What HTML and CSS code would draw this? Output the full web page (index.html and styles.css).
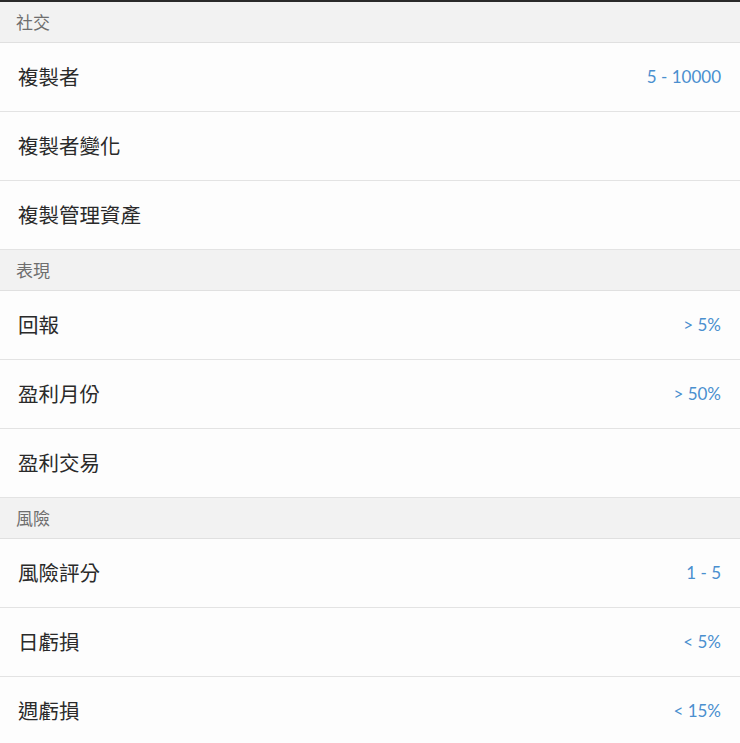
FILE: index.html
```html
<!DOCTYPE html>
<html lang="zh-Hant">
<head>
<meta charset="utf-8">
<title>篩選</title>
<link rel="stylesheet" href="styles.css">
</head>
<body>
<div class="list">
  <div class="section">社交</div>
  <div class="row"><span class="label">複製者</span><span class="value">5 - 10000</span></div>
  <div class="row"><span class="label">複製者變化</span></div>
  <div class="row"><span class="label">複製管理資產</span></div>
  <div class="section">表現</div>
  <div class="row"><span class="label">回報</span><span class="value">&gt; 5%</span></div>
  <div class="row"><span class="label">盈利月份</span><span class="value">&gt; 50%</span></div>
  <div class="row"><span class="label">盈利交易</span></div>
  <div class="section">風險</div>
  <div class="row"><span class="label">風險評分</span><span class="value">1 - 5</span></div>
  <div class="row"><span class="label">日虧損</span><span class="value">&lt; 5%</span></div>
  <div class="row"><span class="label">週虧損</span><span class="value">&lt; 15%</span></div>
</div>
</body>
</html>
```

FILE: styles.css
```css
html, body {
  margin: 0;
  padding: 0;
  background: #fdfdfd;
}
body {
  font-family: "Noto Sans CJK TC", "Noto Sans", sans-serif;
  overflow: hidden;
}
.list {
  border-top: 2px solid #2a2a2a;
  display: flex;
  flex-direction: column;
}
.section {
  height: 38px;
  box-sizing: content-box;
  display: flex;
  align-items: center;
  padding: 0 0 2px 16px;
  background: #f2f2f2;
  border-bottom: 1px solid #e0e0e0;
  color: #6e6e6e;
  font-size: 17px;
}
.row {
  height: 66px;
  box-sizing: content-box;
  display: flex;
  align-items: center;
  justify-content: space-between;
  padding: 0 19px 2px 18px;
  background: #fdfdfd;
  border-bottom: 1px solid #e3e3e3;
}
.label {
  color: #2a2a2a;
  font-size: 20.5px;
}
.value {
  font-family: Lato, "Open Sans", sans-serif;
  color: #4a8fcf;
  font-size: 17px;
  padding-top: 1px;
}
```
